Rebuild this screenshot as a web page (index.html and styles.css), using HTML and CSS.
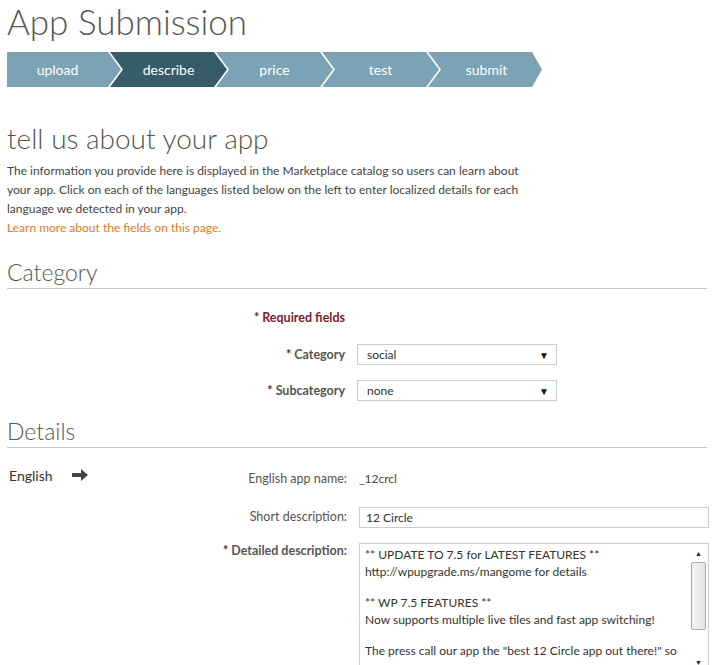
FILE: index.html
```html
<!DOCTYPE html>
<html lang="en">

<head>
    <meta charset="UTF-8">
    <title>App Submission</title>
    <link rel="stylesheet" href="styles.css">
</head>

<body>
    <h1 class="page-title">App Submission</h1>

    <div class="steps">
        <div class="step first">upload</div>
        <div class="step active">describe</div>
        <div class="step">price</div>
        <div class="step">test</div>
        <div class="step last">submit</div>
    </div>

    <h2 class="intro-title">tell us about your app</h2>
    <p class="intro">The information you provide here is displayed in the Marketplace catalog so users can learn about
        your app. Click on each of the languages listed below on the left to enter localized details for each
        language we detected in your app.<br>
        <a href="#" class="learn">Learn more about the fields on this page.</a></p>

    <h3 class="section">Category</h3>
    <div class="form-grid category">
        <div class="label req">* Required fields</div>
        <div></div>

        <div class="label"><span class="star">*</span> Category</div>
        <div class="select"><span>social</span><span class="arrow">&#9660;</span></div>

        <div class="label"><span class="star">*</span> Subcategory</div>
        <div class="select"><span>none</span><span class="arrow">&#9660;</span></div>
    </div>

    <h3 class="section details-title">Details</h3>
    <div class="details">
        <div class="lang">
            <span>English</span>
            <svg width="18" height="14" viewBox="0 0 18 14"><path d="M1 5h9V1l7 6-7 6V9H1z" fill="#444"/></svg>
        </div>
        <div class="form-grid detail-fields">
            <div class="label plain">English app name:</div>
            <div class="value">_12crcl</div>

            <div class="label plain">Short description:</div>
            <div class="input">12 Circle</div>

            <div class="label long"><span class="star">*</span> Detailed description:</div>
            <div class="textarea">
                <div class="textarea-text">
                    <p>** UPDATE TO 7.5 for LATEST FEATURES **<br>http://wpupgrade.ms/mangome for details</p>
                    <p>** WP 7.5 FEATURES **<br>Now supports multiple live tiles and fast app switching!</p>
                    <p>The press call our app the "best 12 Circle app out there!" so</p>
                </div>
                <div class="scrollbar">
                    <div class="scroll-btn">&#9650;</div>
                    <div class="scroll-track"><div class="scroll-thumb"></div></div>
                    <div class="scroll-btn">&#9660;</div>
                </div>
            </div>
        </div>
    </div>
</body>

</html>
```

FILE: styles.css
```css
body {
    margin: 0;
    padding: 0 7px;
    height: 665px;
    overflow: hidden;
    font-family: Lato, 'Open Sans', sans-serif;
    font-size: 12px;
    color: #444;
    background-color: #fff;
}
.page-title {
    margin: 0;
    padding-top: 1px;
    font-size: 35px;
    line-height: 41px;
    font-weight: 300;
    color: #555;
}
.steps {
    display: flex;
    margin-top: 10px;
    height: 35px;
}
.step {
    width: 117px;
    margin-left: -11px;
    padding: 0 13px;
    box-sizing: border-box;
    background-color: #7ba3b5;
    color: #fff;
    font-size: 14px;
    line-height: 35px;
    text-align: center;
    clip-path: polygon(0 0, calc(100% - 13px) 0, 100% 50%, calc(100% - 13px) 100%, 0 100%, 13px 50%);
}
.step.first {
    width: 114px;
    margin-left: 0;
    padding-left: 0;
    clip-path: polygon(0 0, calc(100% - 13px) 0, 100% 50%, calc(100% - 13px) 100%, 0 100%);
}
.step.last {
    width: 114px;
    padding-right: 10px;
    clip-path: polygon(0 0, calc(100% - 10px) 0, 100% 50%, calc(100% - 10px) 100%, 0 100%, 13px 50%);
}
.step.active {
    background-color: #365b69;
}
.intro-title {
    margin: 34px 0 0;
    font-size: 28px;
    line-height: 34px;
    font-weight: 300;
    color: #555;
}
.intro {
    margin: 6px 0 0;
    width: 530px;
    line-height: 19px;
}
.learn {
    color: #e07b25;
    text-decoration: none;
}
.section {
    margin: 20px 0 0;
    padding-bottom: 1px;
    font-size: 23px;
    line-height: 30px;
    font-weight: 300;
    color: #555;
    border-bottom: 1px solid #c8c8c8;
}
.details-title {
    margin-top: 15px;
}
.form-grid {
    display: grid;
    grid-template-columns: 338px 200px;
    column-gap: 12px;
    row-gap: 15px;
    align-items: center;
}
.category {
    margin-top: 21px;
}
.label {
    text-align: right;
    font-size: 12.5px;
    font-weight: bold;
    color: #555;
}
.label.plain {
    font-weight: normal;
}
.star {
    color: #7a1a2e;
}
.req {
    color: #7a1a2e;
    margin-bottom: 4px;
}
.select {
    display: flex;
    justify-content: space-between;
    align-items: center;
    height: 21px;
    padding: 0 7px 0 9px;
    border: 1px solid #ccc;
    box-sizing: border-box;
    color: #333;
}
.arrow {
    font-size: 10px;
    color: #111;
}
.details {
    display: flex;
    margin-top: 17px;
}
.lang {
    width: 203px;
    flex-shrink: 0;
    display: flex;
    align-items: center;
    gap: 18px;
    padding-left: 2px;
    height: 20px;
    font-size: 14px;
    color: #333;
}
.detail-fields {
    margin-top: 4px;
    grid-template-columns: 135px 350px;
    row-gap: 15px;
    align-items: start;
}
.detail-fields .label, .value {
    line-height: 20px;
}
.detail-fields .long {
    margin-top: -2px;
}
.value {
    padding-bottom: 3px;
    color: #444;
}
.input {
    height: 21px;
    padding: 0 6px;
    border: 1px solid #ccc;
    box-sizing: border-box;
    line-height: 19px;
    color: #333;
}
.textarea {
    display: flex;
    height: 130px;
    border: 1px solid #ccc;
    box-sizing: border-box;
    color: #333;
}
.textarea-text {
    flex: 1;
    padding: 2px 5px;
    overflow: hidden;
    line-height: 17px;
}
.textarea-text p {
    margin: 0 0 14px;
}
.scrollbar {
    width: 17px;
    display: flex;
    flex-direction: column;
    padding: 1px;
}
.scroll-btn {
    height: 17px;
    font-size: 7px;
    line-height: 17px;
    text-align: center;
    color: #222;
}
.scroll-track {
    flex: 1;
    padding: 0 1px;
}
.scroll-thumb {
    height: 66px;
    border: 1px solid #aaa;
    border-radius: 2px;
    background: linear-gradient(to right, #f4f4f4, #e4e4e4);
}
```
